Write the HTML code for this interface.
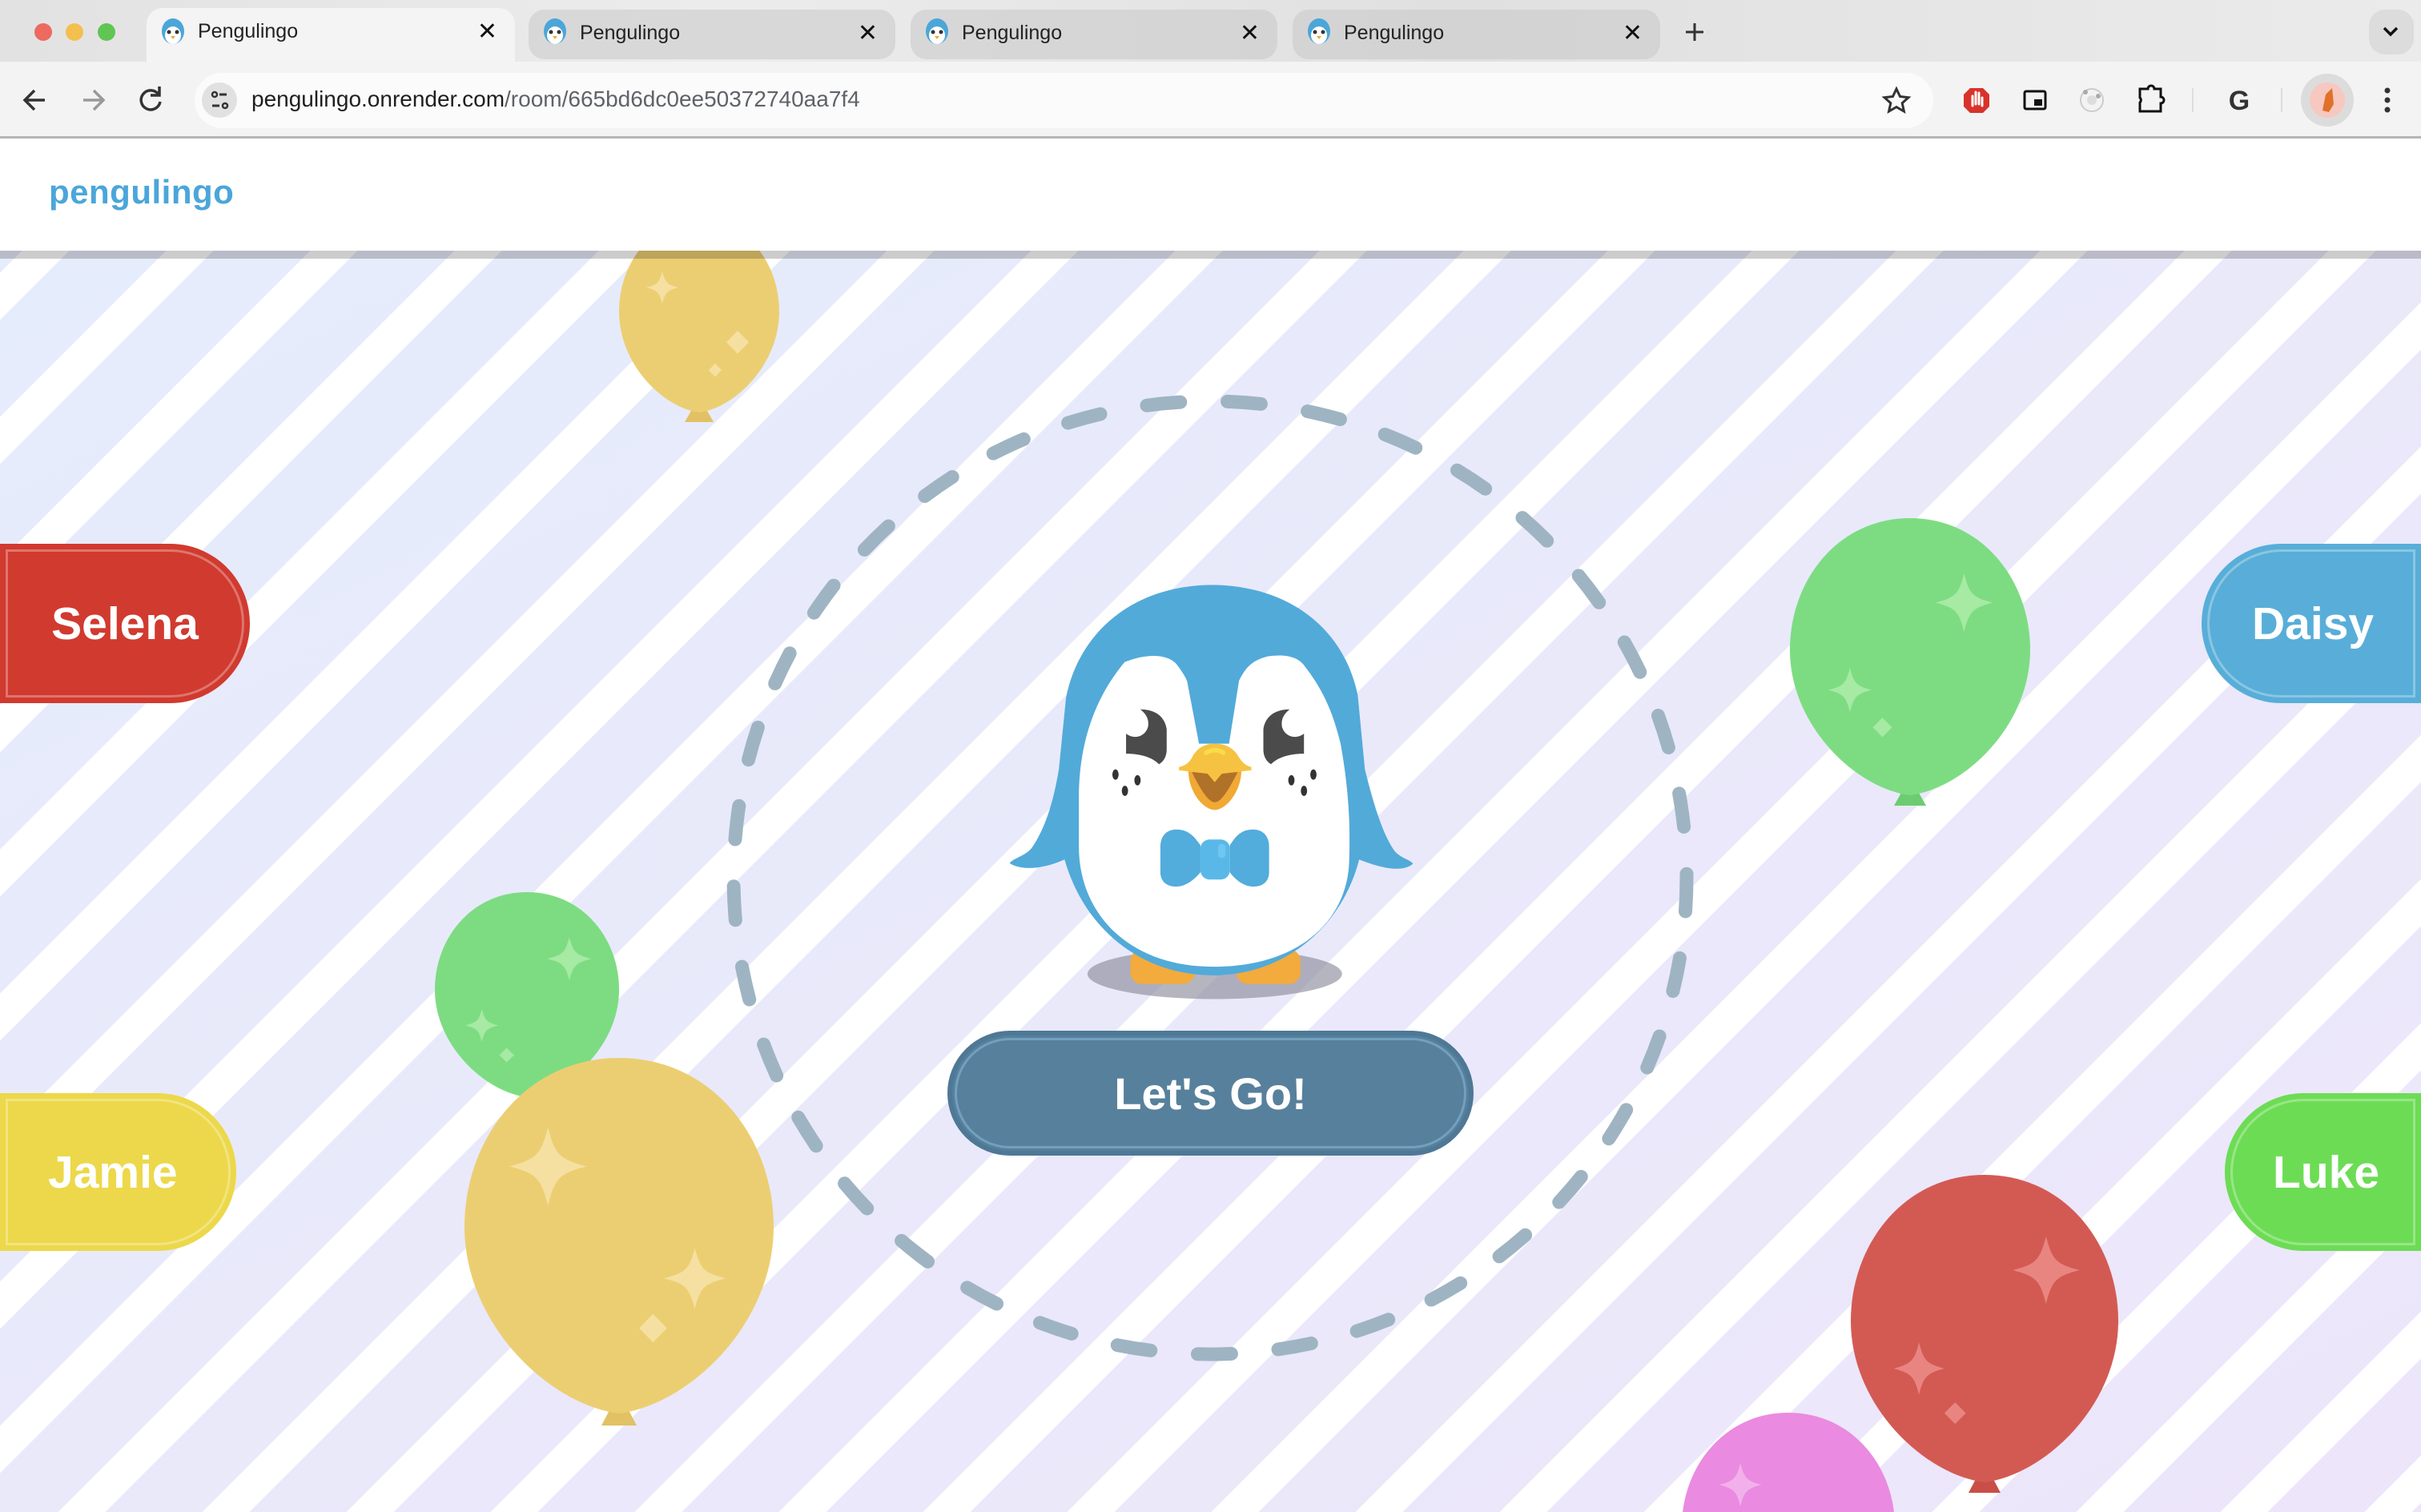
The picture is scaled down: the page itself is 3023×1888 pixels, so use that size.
<!DOCTYPE html>
<html style="overflow:hidden;width:3023px;height:1888px"><head><meta charset="utf-8"><style>
*{margin:0;padding:0;box-sizing:border-box}
body{width:3023px;height:1888px;overflow:hidden;position:relative;font-family:"Liberation Sans",sans-serif;background:#fff}
.abs{position:absolute}
.tab{position:absolute;top:12px;height:62px;border-radius:20px;font-size:25px;color:#222}
.tab span{position:absolute;left:64px;top:15px}
.tab .x{position:absolute;right:22px;top:12px;font-size:30px;color:#111}
.name{position:absolute;height:199px;color:#fff;font-weight:bold;font-size:57px;display:flex;align-items:center;justify-content:center}
.name i{position:absolute;inset:7px;border:3px solid rgba(255,255,255,.3);border-radius:inherit}
</style></head><body>
<div class="abs" style="left:0;top:0;width:3023px;height:172px;background:linear-gradient(90deg,#e2e2e2,#ececec 30%,#e0e0e0 60%,#ebebeb)"></div>
<div class="abs" style="left:0;top:77px;width:3023px;height:93px;background:#f3f3f3"></div>
<div class="abs" style="left:0;top:170px;width:3023px;height:3px;background:#b5b5b5"></div>
<div class="abs" style="left:43px;top:29px;width:22px;height:22px;border-radius:50%;background:#ec6a5e"></div>
<div class="abs" style="left:82px;top:29px;width:22px;height:22px;border-radius:50%;background:#f4bf4f"></div>
<div class="abs" style="left:122px;top:29px;width:22px;height:22px;border-radius:50%;background:#61c554"></div>

<div class="tab" style="left:183px;top:10px;width:460px;height:67px;background:#f4f4f4;border-radius:20px 20px 0 0"><span>Pengulingo</span><b class="x" style="font-weight:normal">✕</b></div>
<div class="tab" style="left:660px;width:458px;background:rgba(200,200,200,.55)"><span>Pengulingo</span><b class="x" style="font-weight:normal">✕</b></div>
<div class="tab" style="left:1137px;width:458px;background:rgba(200,200,200,.55)"><span>Pengulingo</span><b class="x" style="font-weight:normal">✕</b></div>
<div class="tab" style="left:1614px;width:459px;background:rgba(200,200,200,.55)"><span>Pengulingo</span><b class="x" style="font-weight:normal">✕</b></div>
<svg class="abs" style="left:0;top:0" width="3023" height="172">
 <g id="fav"><ellipse cx="216" cy="39" rx="14" ry="16" fill="#4ba6d9"/><ellipse cx="216" cy="44" rx="10" ry="11" fill="#fff"/><circle cx="211" cy="40" r="2.5" fill="#333"/><circle cx="221" cy="40" r="2.5" fill="#333"/><path d="M213 45h6l-3 4z" fill="#f1a935"/></g>
 <use href="#fav" x="477"/><use href="#fav" x="954"/><use href="#fav" x="1431"/>
 <path d="M2105 40h22M2116 29v22" stroke="#333" stroke-width="3"/>
 <rect x="2958" y="12" width="56" height="56" rx="20" fill="#dcdcdc"/>
 <path d="M2977 35l8 8 8-8" stroke="#111" stroke-width="3.5" fill="none"/>
 <path d="M56 125H32M43 113l-12 12 12 12" stroke="#333" stroke-width="3.5" fill="none"/>
 <path d="M104 125h24M117 113l12 12-12 12" stroke="#999" stroke-width="3.5" fill="none"/>
 <path d="M198 118a12 12 0 1 0 2 9M199 108v11h-11" stroke="#333" stroke-width="3.5" fill="none"/>
 <rect x="243" y="91" width="2171" height="69" rx="34.5" fill="#fbfbfb"/>
 <circle cx="274" cy="125" r="22" fill="#e1e1e1"/>
 <circle cx="268" cy="118" r="3" stroke="#333" stroke-width="2.5" fill="none"/><path d="M274 118h9M265 132h9" stroke="#333" stroke-width="3"/><circle cx="281" cy="132" r="3" stroke="#333" stroke-width="2.5" fill="none"/>
 <path d="M2368 111l4.5 9.5 10.5 1.2-7.8 7 2.2 10.3-9.4-5.4-9.4 5.4 2.2-10.3-7.8-7 10.5-1.2z" stroke="#333" stroke-width="3" fill="none"/>
 <path d="M2460 110h16l8 8v15l-8 8h-16l-8-8v-15z" fill="#d8332a"/><path d="M2463 132v-12M2467 130v-15M2471 130v-14M2475 132v-10" stroke="#fff" stroke-width="3" stroke-linecap="round"/>
 <rect x="2528" y="114" width="26" height="22" rx="2" stroke="#111" stroke-width="3" fill="none"/><rect x="2540" y="124" width="10" height="8" fill="#111"/>
 <circle cx="2612" cy="125" r="14" stroke="#ccc" stroke-width="2" fill="none"/><circle cx="2612" cy="125" r="6" fill="#ddd"/><circle cx="2604" cy="115" r="3" fill="#aaa"/><circle cx="2620" cy="120" r="3" fill="#aaa"/>
 <path d="M2672 111h10a4 4 0 0 1 8 0h8v10a4 4 0 0 1 0 8v10h-26v-11a4 4 0 0 0 0-6z" stroke="#111" stroke-width="3" fill="none"/>
 <rect x="2737" y="110" width="2" height="30" fill="#ddd"/>
 <text x="2796" y="137" font-size="34" font-weight="bold" text-anchor="middle" fill="#333">G</text>
 <rect x="2848" y="110" width="2" height="30" fill="#ddd"/>
 <circle cx="2906" cy="125" r="33" fill="#dcdcdc"/><circle cx="2906" cy="125" r="22" fill="#f6c8c0"/><path d="M2900 138l4-20 8-8 2 20-6 10z" fill="#e0702a"/>
 <circle cx="2981" cy="113" r="3.5" fill="#333"/><circle cx="2981" cy="125" r="3.5" fill="#333"/><circle cx="2981" cy="137" r="3.5" fill="#333"/>
</svg>
<div class="abs" style="left:314px;top:108px;font-size:28px;color:#1f1f1f;white-space:nowrap">pengulingo.onrender.com<span style="color:#5f6368">/room/665bd6dc0ee50372740aa7f4</span></div>

<div class="abs" style="left:61px;top:216px;font-size:42px;font-weight:bold;color:#4ba6d9;letter-spacing:.5px">pengulingo</div>

<svg class="abs" style="left:0;top:313px;display:block" width="3023" height="1575" viewBox="0 313 3023 1575">
 <defs>
  <linearGradient id="bg" x1="0" y1="0" x2="1" y2="1"><stop offset="0" stop-color="#e5ecfb"/><stop offset="1" stop-color="#ede6fa"/></linearGradient>
  <pattern id="st" width="180" height="10" patternUnits="userSpaceOnUse" patternTransform="skewX(-45)">
   <rect x="160.5" y="0" width="59" height="10" fill="#fff"/><rect x="-19.5" y="0" width="59" height="10" fill="#fff"/>
  </pattern>
  <path id="bl" d="M0 -1C0.6 -1 1 -0.55 1 -0.05C1 0.5 0.45 0.95 0 1C-0.45 0.95 -1 0.5 -1 -0.05C-1 -0.55 -0.6 -1 0 -1Z"/>
  <path id="sp" d="M0 -1C0.18 -0.3 0.3 -0.18 1 0C0.3 0.18 0.18 0.3 0 1C-0.18 0.3 -0.3 0.18 -1 0C-0.3 -0.18 -0.18 -0.3 0 -1Z" stroke-linejoin="round"/>
  <path id="dm" d="M0 -1L1 0 0 1 -1 0Z"/>
 </defs>
 <rect x="0" y="313" width="3023" height="1575" fill="url(#bg)"/>
 <rect x="0" y="313" width="3023" height="1575" fill="url(#st)"/>
 <circle cx="1511" cy="1096" r="595" fill="none" stroke="#9fb4c2" stroke-width="17" stroke-linecap="round" stroke-dasharray="42 58.9"/>
 <g transform="translate(873 395)"><path d="M-10 118h20l8 14h-36z" fill="#e2c164"/><g transform="scale(100 120)"><use href="#bl" fill="#ecce72"/>
  <g fill="#f5e0a2"><use href="#sp" transform="translate(-0.46 -0.3) scale(.2 .17)"/><use href="#dm" transform="translate(0.48 0.27) scale(.14 .12)"/><use href="#dm" transform="translate(0.2 0.56) scale(.08 .07)"/></g></g></g>
 <g transform="translate(2385 820)"><path d="M-11 170h22l9 16h-40z" fill="#6ccc72"/><g transform="scale(150 173)"><use href="#bl" fill="#7ddc82"/>
  <g fill="#a6eaa4"><use href="#sp" transform="translate(0.45 -0.39) scale(.24 .21)"/><use href="#sp" transform="translate(-0.5 0.24) scale(.18 .16)"/><use href="#dm" transform="translate(-0.23 0.51) scale(.08 .07)"/></g></g></g>
 <g transform="translate(658 1242)"><g transform="scale(115 128)"><use href="#bl" fill="#7ddc82"/>
  <g fill="#a6eaa4"><use href="#sp" transform="translate(0.46 -0.35) scale(.24 .21)"/><use href="#sp" transform="translate(-0.49 0.3) scale(.18 .16)"/><use href="#dm" transform="translate(-0.22 0.59) scale(.08 .07)"/></g></g></g>
 <g transform="translate(773 1543)"><path d="M-12 218h24l10 19h-44z" fill="#e2c164"/><g transform="scale(193 222)"><use href="#bl" fill="#ecce72"/>
  <g fill="#f5e0a2"><use href="#sp" transform="translate(-0.46 -0.39) scale(.25 .22)"/><use href="#sp" transform="translate(0.49 0.24) scale(.2 .17)"/><use href="#dm" transform="translate(0.22 0.52) scale(.09 .08)"/></g></g></g>
 <g transform="translate(2233 1914)"><g transform="scale(133 150)"><use href="#bl" fill="#ea8ae0"/>
  <g fill="#f2b0ea"><use href="#sp" transform="translate(-0.45 -0.4) scale(.2 .18)"/></g></g></g>
 <g transform="translate(2478 1659)"><path d="M-11 188h22l9 17h-40z" fill="#c94e48"/><g transform="scale(167 192)"><use href="#bl" fill="#d35a53"/>
  <g fill="#e98581"><use href="#sp" transform="translate(0.46 -0.38) scale(.25 .22)"/><use href="#sp" transform="translate(-0.49 0.26) scale(.19 .17)"/><use href="#dm" transform="translate(-0.22 0.55) scale(.08 .07)"/></g></g></g>
</svg>
<div class="abs" style="left:0;top:313px;width:3023px;height:10px;background:rgba(0,0,0,.2)"></div>

<svg class="abs" style="left:1240px;top:700px" width="560" height="560" viewBox="0 0 1568 1568">
 <ellipse cx="775" cy="1445" rx="445" ry="88" fill="#8e8d9c" opacity=".65"/>
 <rect x="480" y="1360" width="225" height="120" rx="40" fill="#f2ab3c"/>
 <rect x="850" y="1360" width="225" height="120" rx="40" fill="#f2ab3c"/>
 <path d="M770 85C1050 90 1230 250 1275 470L1300 730C1330 850 1360 950 1400 1010C1420 1040 1460 1045 1468 1060C1440 1085 1380 1085 1280 1045C1220 1280 1020 1450 770 1450C520 1450 320 1290 250 1045C160 1085 90 1080 58 1058C70 1040 110 1035 135 1005C180 940 210 850 230 730L255 480C300 250 490 85 770 85Z" fill="#52aad9"/>
 <path d="M300 830C300 600 380 450 460 355C520 330 600 320 640 360C670 400 680 420 680 430L720 640L825 640L860 420C880 380 900 350 960 335C1030 325 1070 340 1090 370C1160 460 1190 540 1215 640C1240 780 1250 900 1245 1050C1240 1250 1080 1420 770 1420C470 1420 300 1230 300 1000Z" fill="#fff"/>
 <path d="M465 605L465 675C520 675 560 690 580 712C600 700 607 680 607 660L607 590C600 540 560 520 515 520C540 540 545 560 542 580C535 610 500 630 465 605Z" fill="#4b4b4b"/>
 <path d="M1087 605L1087 675C1032 675 992 690 972 712C952 700 945 680 945 660L945 590C952 540 992 520 1037 520C1012 540 1007 560 1010 580C1017 610 1052 630 1087 605Z" fill="#4b4b4b"/>
 <g fill="#333"><ellipse cx="428" cy="748" rx="11" ry="18"/><ellipse cx="505" cy="768" rx="11" ry="18"/><ellipse cx="461" cy="805" rx="11" ry="18"/><ellipse cx="1120" cy="748" rx="11" ry="18"/><ellipse cx="1043" cy="768" rx="11" ry="18"/><ellipse cx="1087" cy="805" rx="11" ry="18"/></g>
 <path d="M683 730C680 800 730 870 775 872C820 870 870 800 868 730Z" fill="#f1a935"/>
 <path d="M695 740C730 810 755 845 775 845C795 845 820 810 855 740Z" fill="#b07228"/>
 <path d="M650 722C680 715 690 700 700 680C720 650 745 640 775 640C805 640 835 650 855 680C870 705 880 715 903 722L903 733L800 745L775 775L750 745L650 733Z" fill="#f5c242"/>
 <path d="M745 672C765 660 790 660 805 672" stroke="#f9dc48" stroke-width="16" stroke-linecap="round" fill="none"/>
 <path d="M585 1000C585 960 610 940 640 940C680 940 700 960 725 995L725 1090C700 1120 670 1140 640 1140C605 1140 585 1120 585 1090Z" fill="#52acdc"/>
 <path d="M965 1000C965 960 940 940 910 940C870 940 850 960 828 995L828 1090C850 1120 880 1140 910 1140C945 1140 965 1120 965 1090Z" fill="#52acdc"/>
 <rect x="725" y="975" width="103" height="140" rx="32" fill="#5ab8e8"/>
 <rect x="787" y="990" width="26" height="50" rx="13" fill="#6fc6f0"/>
</svg>

<div class="abs" style="left:1183px;top:1287px;width:657px;height:156px;border-radius:78px;background:#57809c;border:6px solid #4e7896;color:#fff;font-weight:bold;font-size:56px;display:flex;align-items:center;justify-content:center">
 <i style="position:absolute;inset:3px;border:3px solid #72a0be;border-radius:72px"></i>Let's Go!</div>

<div class="name" style="left:0;top:679px;width:312px;background:#d13a2f;border-radius:0 100px 100px 0"><i></i>Selena</div>
<div class="name" style="left:2749px;top:679px;width:274px;background:#58aed8;border-radius:100px 0 0 100px;justify-content:flex-start;padding-left:63px"><i></i>Daisy</div>
<div class="name" style="left:0;top:1365px;width:295px;height:197px;background:#ecd84a;border-radius:0 100px 100px 0;justify-content:flex-start;padding-left:60px"><i></i>Jamie</div>
<div class="name" style="left:2778px;top:1365px;width:245px;height:197px;background:#6ddc55;border-radius:100px 0 0 100px;justify-content:flex-start;padding-left:60px"><i></i>Luke</div>
</body></html>
